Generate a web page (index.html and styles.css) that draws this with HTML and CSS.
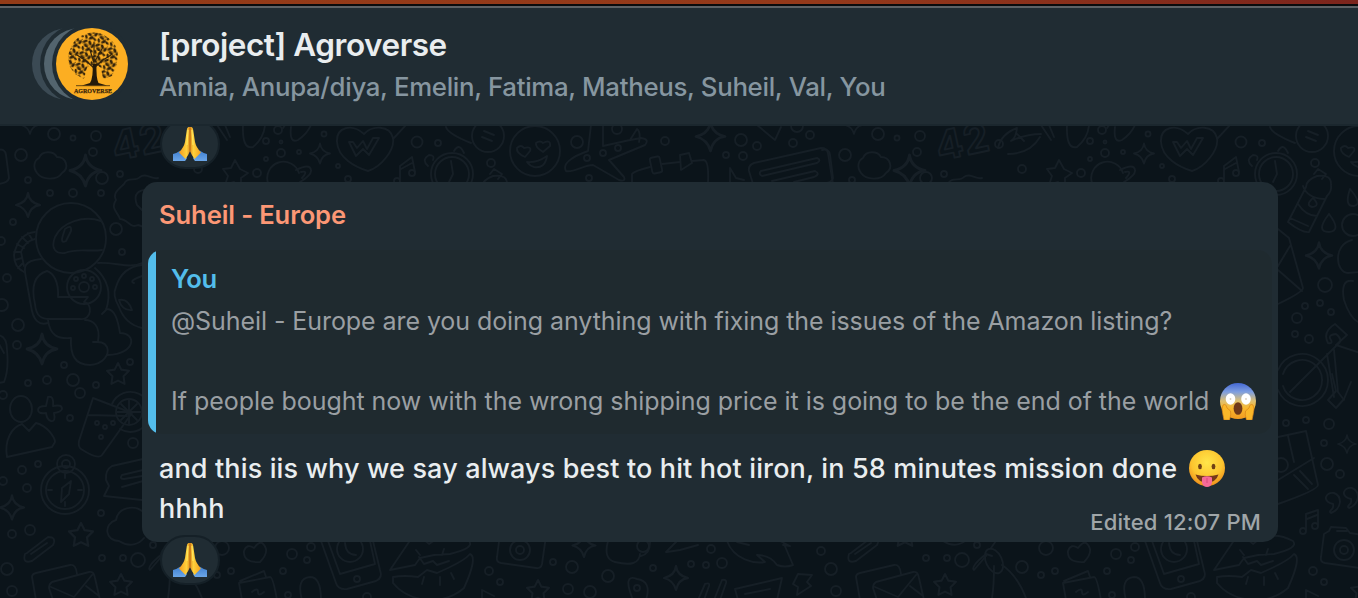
FILE: index.html
```html
<!DOCTYPE html>
<html lang="en">
<head>
<meta charset="utf-8">
<title>Agroverse chat</title>
<link rel="stylesheet" href="styles.css">
</head>
<body>
<svg class="defs" aria-hidden="true">
  <defs>
    <linearGradient id="hand" x1="0" x2="1" y1="0" y2="0"><stop offset="0" stop-color="#f39a1d"/><stop offset=".35" stop-color="#ffd23c"/><stop offset=".5" stop-color="#e08a1c"/><stop offset=".65" stop-color="#ffd23c"/><stop offset="1" stop-color="#f5a01d"/></linearGradient>
    <linearGradient id="cuff" x1="0" x2="0" y1="0" y2="1"><stop offset="0" stop-color="#3f7fd0"/><stop offset="1" stop-color="#6ba6e8"/></linearGradient>
    <radialGradient id="face" cx=".5" cy=".35" r=".65"><stop offset="0" stop-color="#ffe64a"/><stop offset=".65" stop-color="#fdc52f"/><stop offset="1" stop-color="#ee8f1c"/></radialGradient>
    <linearGradient id="fear" x1="0" x2="0" y1="0" y2="1"><stop offset="0" stop-color="#4468d4"/><stop offset=".25" stop-color="#7f9fe0"/><stop offset=".5" stop-color="#dfc070"/><stop offset=".7" stop-color="#f9b82e"/><stop offset="1" stop-color="#f39a20"/></linearGradient>
    <pattern id="foliage" width="13" height="12" patternUnits="userSpaceOnUse" patternTransform="rotate(17)">
      <g fill="#30210b">
        <ellipse cx="2.500" cy="2.500" rx="2.500" ry="1.300" transform="rotate(-35 2.500 2.500)"/>
        <ellipse cx="7.500" cy="2.600" rx="2.400" ry="1.400" transform="rotate(50 7.500 2.600)"/>
        <ellipse cx="11" cy="5" rx="2.300" ry="1.300" transform="rotate(-60 11 5)"/>
        <ellipse cx="4.500" cy="6.500" rx="2.500" ry="1.400" transform="rotate(15 4.500 6.500)"/>
        <ellipse cx="2.300" cy="9.800" rx="2.200" ry="1.200" transform="rotate(65 2.300 9.800)"/>
        <ellipse cx="7.500" cy="9.600" rx="2.500" ry="1.400" transform="rotate(-45 7.500 9.600)"/>
        <ellipse cx="11" cy="10" rx="2" ry="1.100" transform="rotate(30 11 10)"/>
      </g>
      <path d="M0 5Q4 4 6 5T13 1M5 12Q6 8 9 6.500" fill="none" stroke="#30210b" stroke-width=".6"/>
    </pattern>
    <symbol id="pray" viewBox="0 0 34 34">
      <path d="M0 27Q4 26 7.500 23.500L14 31Q13 33 12 34H0Z" fill="url(#cuff)"/><path d="M34 27Q30 26 26.500 23.500L20 31Q21 33 22 34H34Z" fill="url(#cuff)"/>
      <path d="M15.500 0Q17 -.5 18.500 0Q20 .3 20.200 3L22 15Q23 20 28 25.500L21.500 32Q18.500 28 17 24Q15.500 28 12.500 32L6 25.500Q11 20 12 15L13.800 3Q14 .3 15.500 0Z" fill="url(#hand)"/>
      <path d="M17 .5V24" stroke="#b76b14" stroke-width="1"/><path d="M15 3 14 18M19 3 20 18" stroke="#ffe55a" stroke-width="1.200"/>
    </symbol>
    <symbol id="star4" viewBox="-10 -10 20 20" overflow="visible"><path d="M0-10Q1-2 10 0Q2 1 0 10Q-2 2-10 0Q-1-2 0-10Z"/></symbol>
    <symbol id="star5" viewBox="-10 -10 20 20" overflow="visible"><path d="m0-10 3 6 7 1-5 5 1 7-6-3-6 3 1-7-5-5 7-1Z"/></symbol>

    <g id="tile">
      <path d="M39 158C42 150 54 151 57 157C66 157 70 168 62 173C57 181 42 180 37 173C32 166 35 160 39 158Z"/>
      <use href="#star4" x="70" y="155" width="31" height="31"/><use href="#star4" x="20" y="116" width="20" height="18"/>
      <text x="115" y="161" font-size="40" font-weight="700" letter-spacing="1" transform="rotate(-12 115 161)">42</text>
      <path d="M-2 150Q5 148 6 155L9 178Q8 183-2 184M116 200C112 193 120 188 124 184C127 176 136 182 140 177C146 172 152 180 158 178M116 200C110 209 118 212 120 219C128 219 130 229 138 225L144 227M144 190Q132 192 137 205L144 212"/>
      <circle cx="71" cy="238" r="35"/>
      <path d="M101 221C84 215 62 222 55 237C50 250 57 254 65 253C76 248 90 252 102 250M65 229Q72 224 71 231L66 241Q60 244 63 235Z"/>
      <path d="M35 232Q18 234 14 255Q14 267 24 272M35 239Q25 241 21 252L24 266M22 237l6 6M17 244l7 4M14 252h7M15 260l7-2M18 268l5-5M28 233l4 6"/>
      <path d="M41 259C22 261 24 268 26 278L31 306C33 320 39 326 48 323M47 271C34 275 31 287 35 304C36 317 42 319 50 319L80 319C92 321 93 303 84 302L88 297H58C59 281 53 273 47 271"/>
      <circle cx="84" cy="287" r="17"/><circle cx="84" cy="287" r="5"/>
      <circle cx="84" cy="276" r="2"/><circle cx="92" cy="279" r="2"/><circle cx="95" cy="287" r="2"/><circle cx="76" cy="279" r="2"/><circle cx="73" cy="288" r="2"/>
      <path d="M48 320C50 336 58 339 71 338C70 355 75 365 90 365C103 364 110 355 107 347C104 341 98 342 93 342M98 341C101 325 92 320 85 320M98 263C115 262 130 269 142 263M95 268C109 280 111 295 106 310L102 314M106 309C115 308 118 321 120 333C137 333 136 354 108 355"/>
      <path d="M142 265Q122 267 116 287Q112 295 119 307Q125 324 142 328M142 276Q128 281 134 283M119 300q9-2 13 10q-10 1-13-10"/>
      <use href="#star4" x="16" y="193" width="24" height="24"/><use href="#star4" x="27" y="334" width="30" height="30"/><use href="#star5" x="107" y="363" width="22" height="22"/>
      <path d="M-2 335Q7 336 7 350Q9 370 4 382L-2 383M-2 342 4 353"/>
      <ellipse cx="21" cy="409" rx="11" ry="13"/><path d="M7 457C4 440 12 427 22 424L29 431 36 423C48 426 55 438 55 442L52 447ZM48 397q6-2 5 9q9-2 9 3q-1 3-8 4q2 9-3 8q-4-1-5-8q-8 1-8-3q0-4 8-4Z"/>
      <path d="M93 398 132 413 102 455Q98 460 81 449 78 447 79 441ZM88 415 127 416"/><circle cx="97" cy="423" r="2"/><circle cx="105" cy="427" r="2"/><circle cx="113" cy="423" r="2"/><circle cx="101" cy="437" r="2"/>
      <path d="M112 404A20 20 0 1 1 120 429"/><circle cx="129" cy="412" r="13"/><path d="M129 400v24M117 412h24M121 404l16 16M137 404l-16 16"/>
      <circle cx="65" cy="490" r="24"/><circle cx="65" cy="490" r="19"/><circle cx="66" cy="464" r="9"/><circle cx="66" cy="464" r="4"/><path d="M71 481 69 494 61 502 62 488ZM65 474v4M65 502v4M48 490h4M78 490h4"/>
      <path d="M143 459 112 466Q105 470 106 480L109 486 104 496 142 500M143 470 122 475q-3 4 2 4l18-3M143 481 122 487"/>
      <path d="M142 511C134 505 118 507 116 520C103 524 105 541 119 541C130 548 139 544 144 538"/><path d="M27 553 48 537Q57 537 53 545L32 561Q22 564 25 554ZM31 554 47 543"/>
      <use href="#star4" x="0" y="494" width="24" height="27"/><use href="#star5" x="69" y="523" width="24" height="24"/><use href="#star5" x="110" y="574" width="22" height="22"/>
      <path d="M36 600 32 577Q32 574 36 573L70 565Q76 564 77 574M53 600 49 588Q49 584 52 582L89 572Q94 571 95 578L100 600M51 587 74 597 92 575M86 586l13 10"/>
      <path d="M150 570 162 556M150 570q-4-3 12-16l6 2M178 565q15 10 24 33M170 566q0 20-2 32M167 548 174 538"/><ellipse cx="170" cy="561" rx="8" ry="13" transform="rotate(-25 170 561)"/>
      <path d="M174 148q3-14 19-20q-1 10-6 13q15-7 30-7M184 154q22 0 32-17M225 125 230 137M217 125l10 15M243 125Q242 150 253 147Q264 138 265 125M192 133l8 8"/>
      <path d="m235 160 5 9 8 4-7 5v9l-7-5-9 3 3-9-5-7 8-1ZM283 128Q291 115 306 125M291 127Q289 144 298 140 307 134 311 125M268 183A16 16 0 0 1 299 173M296 170Q310 163 311 170Q312 175 300 182M301 172q8-2 1 6"/>
      <use href="#star4" x="310" y="143" width="20" height="21"/><path d="M364 134C352 123 336 127 337 142C338 158 355 167 368 171C381 167 395 150 393 138C390 125 372 125 364 134ZM393 139 406 125M349 142l7 14 7-7 6 6 10-17h-6l-6 11-4-8-6 7-4-6Z"/>
      <path d="M400 179V166L412 157 415 172M401 169 412 163"/><circle cx="397" cy="181" r="3"/><circle cx="412" cy="173" r="3"/>
      <circle cx="452" cy="174" r="21"/><circle cx="452" cy="174" r="17"/><path d="M451 161 453 174 449 182M428 166Q421 160 429 155 435 155 433 160M454 151Q459 142 464 153M446 127q2 7 25 16"/><circle cx="488" cy="136" r="16"/><path d="m484 131 10 4m-12 2 10 4"/>
      <circle cx="535" cy="151" r="25"/><path d="M525 157q-9-4-8-9 4-4 7 0 8-2 6 3ZM543 152q-8-5-7-9 4-3 7 0 8-4 7 3ZM527 162q10 1 20-6Q545 169 534 167 530 166 527 162Z"/>
      <path d="M591 125 588 151C571 157 562 164 566 171C573 173 584 165 593 165L619 180Q626 182 624 177L609 160 645 145Q650 139 641 138L625 141M603 125V146L630 140 637 129Q641 132 639 142"/>
      <path d="M632 183 632 174Q634 171 650 167M662 164 680 162"/><rect x="651" y="157" width="10" height="16" rx="2" transform="rotate(-12 656 165)"/>
      <use href="#star4" x="696" y="121" width="29" height="31"/><path d="M680 155 689 153 692 163 681 170ZM692 161 704 160Q709 161 708 182M757 125 775 140 781 127M730 184 730 168 736 178 744 180"/>
      <path d="M753 184 749 171Q748 165 754 163L821 148Q827 148 828 153L833 184M761 171 817 158Q822 160 817 163L762 176Q758 174 761 171M772 181 815 171q6 3-1 6l-20 5"/>
      <path d="M493 176Q508 174 507 185 508 191 503 196L485 232Q478 233 464 222L482 187Q482 180 493 176ZM479 186Q483 198 500 199M474 204Q482 216 493 216M466 218 484 226M490 174l4-5 8 5-4 5M489 198q8 8-1 9-7-2 1-9"/>
      <path d="M526 189q13 15 4 17-10 1-4-17M505 214q-14 18 0 18 13-1 0-18M528 240C508 245 512 273 524 273L536 272M529 281Q516 279 520 300 526 319 536 323"/><circle cx="529" cy="225" r="11"/>
      <path d="M454 229 465 238 479 288Q479 292 454 304M454 270 478 291M454 266 466 246"/>
      <use href="#star4" x="482" y="242" width="26" height="27"/><path d="M478 380 513 345Q520 340 512 334 503 335 507 340 509 344 504 343 498 332 511 324L523 335 512 345 536 353M503 354 510 397M510 350 514 392 520 400"/>
      <path d="M454 370A26 26 0 1 1 454 390M459 374A20 20 0 1 1 459 386M478 380l-12 12"/>
      <path d="M508 374 512 391 504 400 512 408 520 399 527 382"/>
      <path d="M454 437 482 431 494 485Q494 490 454 504M490 458 454 480M470 475 484 489M476 471 488 484M464 436 470 462"/><circle cx="457" cy="465" r="7"/>
      <use href="#star4" x="514" y="435" width="18" height="18"/>
      <path d="M509 504q-8-2-7-7 2-5 8-4 6 2 6 9-1 8-9 11-2-1 0-3 3-2 2-6M527 499q-8-2-7-7 2-5 8-4 6 2 6 9-1 8-9 11-2-1 0-3 3-2 2-6"/>
      <path d="M482 530V514L494 510V525M483 519l10-4"/><circle cx="479" cy="531" r="3"/><circle cx="491" cy="526" r="3"/>
      <path d="M500 534 505 531 507 527 522 528 526 533 546 536 542 564Q541 569 536 568L501 563Q496 562 497 557ZM513 531h10"/><circle cx="520" cy="550" r="10"/><circle cx="520" cy="550" r="4"/>
      <path d="M390 570 411 539Q423 537 429 544 447 529 469 541 475 548 450 554L434 555 420 558 415 565ZM393 577Q404 575 418 577L427 570 437 573 448 568Q465 560 470 554 478 557 464 588 449 601 428 600 405 598 393 583ZM419 557l5 7 9-3 4 4 12-4M420 555l-4-5M442 555l2-6M424 577l-2 7M440 577v8M451 573l3 6"/>
      <path d="M321 541 336 583Q338 590 347 589L376 581Q383 578 380 570L373 541M328 541 340 574 375 564 370 541"/><circle cx="357" cy="579" r="3"/><circle cx="350" cy="549" r="13"/><path d="M345 543q1 12 11 12"/>
      <path d="M260 562Q243 563 244 551 247 543 254 548 262 537 266 549 267 555 260 562ZM242 600 239 583 270 577Q273 577 277 600M240 581 264 571 266 577M252 592q6-5 6 0t6 0M302 600Q296 578 310 577 321 577 321 600M482 600V590L494 596"/>
      <use href="#star5" x="527" y="580" width="22" height="22"/><use href="#star4" x="572" y="534" width="24" height="23"/><use href="#star4" x="664" y="566" width="24" height="24"/>
      <path d="M608 541Q603 559 615 562 639 568 640 554M650 542Q650 554 641 556M633 600Q622 573 637 579 652 581 646 600"/><circle cx="637" cy="588" r="3"/><circle cx="643" cy="546" r="6"/><path d="M666 552 677 541M667 552 680 550 698 545"/>
      <path d="M727 541C734 560 755 564 765 562L757 555Q770 555 777 565 785 568 793 565L784 544M737 542l12 3M780 541l10 5-7-1M738 600 735 589 782 578 777 600M745 594 770 589M798 574 812 575 807 582 811 586 797 595 798 587 793 584ZM698 600l7-16q5-2 4 2l-5 14M714 600l8-20q5-1 4 3l-6 17"/>
      <g id="dots">
        <circle cx="54" cy="134" r="6"/><circle cx="96" cy="136" r="5"/><circle cx="73" cy="138" r="2.500"/><circle cx="93" cy="152" r="4"/><circle cx="21" cy="155" r="6"/><circle cx="28" cy="180" r="3"/><circle cx="73" cy="193" r="4"/><circle cx="50" cy="193" r="3"/><circle cx="102" cy="178" r="6"/><circle cx="120" cy="174" r="3"/><circle cx="101" cy="193" r="3"/><circle cx="116" cy="229" r="6"/><circle cx="122" cy="252" r="3"/><circle cx="13" cy="222" r="3"/><circle cx="7" cy="278" r="4"/><circle cx="1" cy="241" r="4"/><circle cx="2" cy="305" r="6"/><circle cx="18" cy="325" r="6"/><circle cx="17" cy="345" r="4"/><circle cx="64" cy="365" r="3"/><circle cx="47" cy="380" r="4"/><circle cx="73" cy="380" r="6"/><circle cx="28" cy="383" r="3"/><circle cx="130" cy="362" r="3"/><circle cx="96" cy="385" r="3"/><circle cx="80" cy="393" r="5"/><circle cx="3" cy="395" r="4"/><circle cx="70" cy="418" r="3"/><circle cx="133" cy="443" r="5"/>
        <circle cx="22" cy="470" r="4"/><circle cx="38" cy="464" r="3"/><circle cx="27" cy="488" r="4"/><circle cx="3" cy="481" r="4"/><circle cx="12" cy="534" r="4"/><circle cx="30" cy="530" r="5"/><circle cx="7" cy="569" r="6"/><circle cx="12" cy="591" r="5"/><circle cx="102" cy="558" r="3"/><circle cx="123" cy="558" r="3"/><circle cx="138" cy="560" r="7"/><circle cx="101" cy="513" r="3"/><circle cx="153" cy="545" r="3"/><circle cx="222" cy="548" r="7"/><circle cx="198" cy="567" r="6"/><circle cx="217" cy="575" r="3"/><circle cx="231" cy="571" r="3"/>
        <circle cx="417" cy="142" r="5.500"/><circle cx="438" cy="143" r="3"/><circle cx="266" cy="141" r="3"/><circle cx="278" cy="130" r="4"/><circle cx="281" cy="153" r="4"/><circle cx="281" cy="142" r="1.500"/><circle cx="299" cy="152" r="2"/><circle cx="324" cy="134" r="2.500"/><circle cx="266" cy="159" r="2"/><circle cx="257" cy="173" r="4"/><circle cx="338" cy="166" r="2"/><circle cx="348" cy="179" r="3"/><circle cx="491" cy="163" r="4"/><circle cx="577" cy="142" r="6"/><circle cx="617" cy="129" r="5"/><circle cx="665" cy="141" r="4"/><circle cx="603" cy="153" r="3"/><circle cx="618" cy="148" r="3"/><circle cx="587" cy="158" r="3"/><circle cx="589" cy="178" r="3"/><circle cx="198" cy="169" r="4"/><circle cx="175" cy="144" r="4"/>
        <circle cx="741" cy="140" r="6"/><circle cx="757" cy="146" r="4"/><circle cx="726" cy="155" r="3"/><circle cx="743" cy="156" r="4"/><circle cx="793" cy="143" r="4"/><circle cx="810" cy="135" r="4"/><circle cx="797" cy="126" r="6"/>
        <circle cx="501" cy="285" r="7"/><circle cx="481" cy="306" r="3"/><circle cx="496" cy="303" r="3"/><circle cx="507" cy="312" r="3"/><circle cx="473" cy="318" r="5"/><circle cx="471" cy="334" r="3"/><circle cx="485" cy="339" r="4"/><circle cx="462" cy="423" r="3"/><circle cx="482" cy="420" r="3"/><circle cx="505" cy="424" r="5"/><circle cx="500" cy="443" r="3"/><circle cx="503" cy="464" r="6"/><circle cx="516" cy="474" r="4"/>
        <circle cx="292" cy="554" r="5"/><circle cx="311" cy="547" r="4"/><circle cx="307" cy="560" r="3"/><circle cx="283" cy="571" r="3"/><circle cx="489" cy="571" r="4"/><circle cx="500" cy="582" r="3"/><circle cx="553" cy="562" r="3"/><circle cx="572" cy="567" r="6"/><circle cx="608" cy="576" r="6"/><circle cx="568" cy="589" r="5"/><circle cx="590" cy="592" r="6"/><circle cx="653" cy="568" r="3"/><circle cx="711" cy="549" r="4"/><circle cx="691" cy="564" r="3"/><circle cx="706" cy="565" r="3"/><circle cx="722" cy="563" r="5"/><circle cx="821" cy="551" r="4"/><circle cx="288" cy="595" r="3"/><circle cx="367" cy="597" r="4"/>
      </g>
    </g>
  </defs>
</svg>

<div class="app">
  <div class="strip"></div>
  <header class="header">
    <svg class="avatar" viewBox="32 28 96 72" aria-hidden="true">
      <circle cx="68" cy="64" r="36" fill="#3b4a54"/><circle cx="80" cy="64" r="40" fill="#202c33"/>
      <circle cx="80" cy="64" r="36" fill="#53646e"/><circle cx="92" cy="64" r="40" fill="#202c33"/>
      <circle cx="92" cy="64" r="36" fill="#fcae22"/>
      <path d="M75 74 70 67Q66 57 70 50Q74 37 86 34Q97 30 107 37Q118 44 118 56Q117 68 112 76L103 79 101 68Q94 61 87 68L84 79Z" fill="url(#foliage)"/>
      <path d="M94 70V58M94 68 85 60M94 68 104 59M94 63 90 50M95 61 102 49M86 61 77 55M103 60 111 55M94 55V42" fill="none" stroke="#30210b" stroke-width="1.100" stroke-linecap="round"/>
      <path d="M92.500 64H96.500Q96 78 98.500 83L107 85.500H82L90 83Q93.500 77 92.500 64Z" fill="#241a0a"/>
      <path d="M76 85.700h34" stroke="#3d290a" stroke-width=".8"/>
      <text class="avatar-label" x="93" y="93" text-anchor="middle" textLength="38" lengthAdjust="spacingAndGlyphs">AGROVERSE</text>
    </svg>
    <div class="heading">
      <div class="title">[project] Agroverse</div>
      <div class="members">Annia, Anupa/diya, Emelin, Fatima, Matheus, Suheil, Val, You</div>
    </div>
  </header>

  <main class="chat">
    <svg class="wallpaper" viewBox="0 126 1358 472" aria-hidden="true"><use href="#tile"/><use href="#tile" x="824"/></svg>
    <div class="thread">
      <div class="reaction reaction-first"><svg class="pray"><use href="#pray"/></svg></div>
      <article class="bubble">
        <div class="sender">Suheil - Europe</div>
        <div class="quote">
          <div class="quote-name">You</div>
          <div class="quote-text q1">@Suheil - Europe are you doing anything with fixing the issues of the Amazon listing?</div>
          <div class="quote-text q2"><span>If people bought now with the wrong shipping price it is going to be the end of the world</span>
            <svg class="emoji" viewBox="0 0 38 38" aria-hidden="true">
              <circle cx="19" cy="19" r="18" fill="url(#fear)"/>
              <ellipse cx="11.500" cy="17" rx="4.800" ry="5.800" fill="#fff"/><ellipse cx="27" cy="17" rx="4.800" ry="5.800" fill="#fff"/><circle cx="11.500" cy="17" r=".9" fill="#d8cdbb"/><circle cx="27" cy="17" r=".9" fill="#d8cdbb"/>
              <ellipse cx="19" cy="26.500" rx="4.400" ry="6.300" fill="#70391a"/>
              <path d="M4 23Q7 21 8 26L11.500 29Q12.500 32 10.500 38H5Q3.500 31 3 27ZM34 23Q31 21 30 26L26.500 29Q25.500 32 27.500 38H33Q34.500 31 35 27Z" fill="#fbb729" stroke="#d98219" stroke-width=".7"/>
            </svg>
          </div>
        </div>
        <div class="message">
          <div class="line"><span class="m1">and this iis why we say always best to hit hot iiron, in 58 minutes mission done</span>
            <svg class="emoji" viewBox="0 0 38 38" aria-hidden="true">
              <circle cx="19" cy="19" r="18" fill="url(#face)"/><ellipse cx="12" cy="17.500" rx="1.900" ry="2.700" fill="#704115"/><ellipse cx="25.500" cy="17.500" rx="1.900" ry="2.700" fill="#704115"/>
              <path d="M7.500 25.500Q19 28.500 30.500 25.500Q28 33.500 19 33.500Q10 33.500 7.500 25.500Z" fill="#76391a"/><path d="M14 28.500Q19 26 24 28.500V33.500Q23 38 19 38Q15 38 14 33.500Z" fill="#f76a98"/><path d="M19 29v5" stroke="#d9487c"/>
            </svg>
          </div>
          <div class="line last"><span class="m2">hhhh</span><span class="meta">Edited 12:07 PM</span></div>
        </div>
      </article>
      <div class="reaction reaction-last"><svg class="pray"><use href="#pray"/></svg></div>
    </div>
  </main>
</div>
</body>
</html>
```

FILE: styles.css
```css
* { box-sizing: border-box; }
body { margin: 0; background: #0b141a; font-family: Inter, "Liberation Sans", sans-serif; }
.defs { display: block; width: 0; height: 0; }
.app { width: 1358px; height: 598px; display: flex; flex-direction: column; overflow: hidden; }
.strip { height: 8px; flex: none; border-bottom: 2px solid #5d6165; background: linear-gradient(#0a0b0d, #0a0b0d) 0 4px / 100% 2px no-repeat, linear-gradient(90deg, #943b17, #95391a 60%, #7c241c); }
.header { height: 118px; flex: none; display: flex; padding: 20px 32px 0; gap: 31px; background: #202c33; border-bottom: 2px solid #1b272e; position: relative; z-index: 2; }
.avatar { width: 96px; height: 72px; flex: none; }
.avatar-label { font: 700 7px "Liberation Serif", serif; fill: #3a260a; stroke: #3a260a; stroke-width: .25px; }
.heading { white-space: nowrap; }
.title { margin-top: -3px; font-size: 31.5px; line-height: 40px; font-weight: 600; color: #e9edef; letter-spacing: -.45px; }
.members { margin-top: 2px; font-size: 25.8px; line-height: 40px; font-weight: 450; color: #8696a0; letter-spacing: -.31px; }
.chat { height: 472px; display: grid; grid-template-columns: 1358px; overflow: hidden; }
.wallpaper { grid-area: 1 / 1; width: 1358px; height: 472px; fill: none; stroke: #161f26; stroke-width: 1.9; stroke-linejoin: round; stroke-linecap: round; font-family: Inter, sans-serif; }
.thread { grid-area: 1 / 1; padding-left: 142px; position: relative; }
.reaction { width: 60px; height: 50px; margin: -7px 0 0 18px; border: 2px solid #152027; border-radius: 25px; background: #202c33; display: flex; justify-content: center; padding-top: 6px; position: relative; }
.pray { width: 34px; height: 34px; }
.bubble { width: 1136px; height: 360px; margin-top: 13px; padding: 13px 6px 0; border-radius: 15px; background: #202c33; white-space: nowrap; }
.sender { padding-left: 11px; font-size: 25.600px; line-height: 40px; font-weight: 600; color: #fc9775; letter-spacing: -.12px; }
.quote { height: 184px; margin-top: 15px; padding: 9px 16px 0 23px; border-radius: 14px; background: linear-gradient(90deg, #53bdeb 8px, #1f2a2f 8px); }
.quote-name { font-size: 25.600px; line-height: 40px; font-weight: 600; color: #53bdeb; letter-spacing: -.4px; }
.quote-text { height: 40px; font-size: 25px; line-height: 40px; color: #9a9fa3; display: flex; align-items: center; gap: 10px; letter-spacing: -.07px; }
.q1 { margin-top: 2px; }
.q2 { margin-top: 40px; letter-spacing: -.04px; }
.emoji { width: 38px; height: 38px; flex: none; }
.message { padding: 15px 11px 0 11px; font-size: 27px; font-weight: 500; color: #e9edef; letter-spacing: .135px; }
.line { height: 40px; line-height: 40px; display: flex; align-items: center; gap: 11px; }
.line .emoji { margin-top: -2px; }
.last { justify-content: space-between; align-items: flex-start; }
.meta { margin-top: 13px; font-size: 22px; font-weight: 450; color: #a0a6a9; letter-spacing: .2px; }
```
